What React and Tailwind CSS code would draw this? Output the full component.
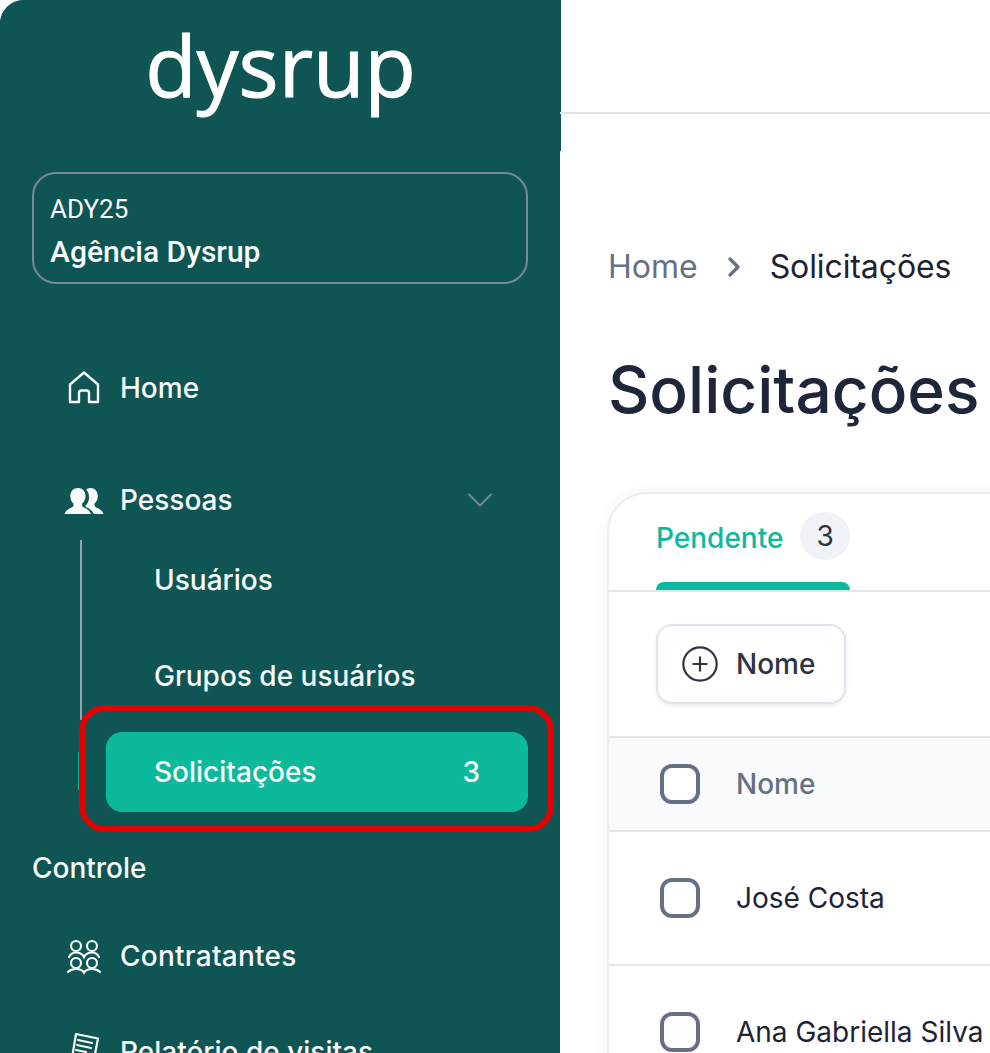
import { ChevronDown, ChevronRight, CirclePlus } from "lucide-react";

function HomeIcon() {
    return (
        <svg className="w-10 h-10" viewBox="0 0 40 40" fill="none" stroke="currentColor" strokeWidth="2.4" strokeLinejoin="round" strokeLinecap="round">
            <path d="M6 16.500 20 4.500l14 12V34H25V25a2.500 2.500 0 0 0-2.500-2.500h-5A2.500 2.500 0 0 0 15 25v9H6z" />
        </svg>
    );
}

function PeopleIcon() {
    return (
        <svg className="w-10 h-10" viewBox="0 0 40 40" fill="#f8fafc">
            <path d="M14 8c4.600 0 7.500 3.400 7.500 8 0 3.400-1.400 6-3.400 7.600v1.600c0 1.300 1 2 2.400 2.600 2.500 1 5.300 2.700 6.500 6.200H.5c1.200-3.500 4-5.200 6.500-6.200 1.400-.6 2.500-1.300 2.500-2.600v-1.600C7.500 22 6.300 19.400 6.300 16c0-4.600 3.100-8 7.700-8z" />
            <path d="M26.500 8c4.300 0 7.300 3.400 7.300 8 0 3.400-1.300 6-3.300 7.600v1.600c0 1.300 1.100 2 2.500 2.600 2.500 1 5.300 2.700 6.500 6.200h-9.800c-1.200-3-3.500-5-6.700-6.400-1.100-.5-1.600-1-1.600-1.800 2.400-2.100 3.600-5 3.600-8.300 0-3.300-.8-6-2.700-8 1.200-1 2.500-1.500 4.200-1.500z" />
        </svg>
    );
}

function GroupIcon() {
    return (
        <svg className="w-10 h-10" viewBox="0 0 40 40" fill="none" stroke="currentColor" strokeWidth="2.2" strokeLinecap="round">
            <circle cx="12" cy="10" r="5" />
            <circle cx="28" cy="10" r="5" />
            <circle cx="12" cy="27" r="5" />
            <circle cx="28" cy="27" r="5" />
            <path d="M5 21c1.500-3 4-4.500 7-4.500 3.500 0 6.500 1.500 8 4.500 1.500-3 4.500-4.500 8-4.500 3 0 5.500 1.500 7 4.500" />
            <path d="M4 36c2-2 5-3 8-3 3.500 0 6.500 1 8 3.500 1.500-2.500 4.500-3.500 8-3.500 3 0 6 1 8 3" />
        </svg>
    );
}

function ReportIcon() {
    return (
        <svg className="w-10 h-10" viewBox="0 0 40 40" fill="none" stroke="currentColor" strokeWidth="2.2" strokeLinecap="round" strokeLinejoin="round">
            <path d="M12 2 34 6.500 28 38H6z" />
            <path d="M14 8l14 3M13 13l14 3M12 18l10 2" />
        </svg>
    );
}

function NavItem({ icon, label, chevron, className = "" }) {
    return (
        <div className="flex items-center h-20 pl-8 pr-[26px] gap-4 text-[28px] font-medium text-[#f8fafc]">
            <span className="w-10 h-10 shrink-0">{icon}</span>
            <span className={`flex-1 ${className}`}>{label}</span>
            {chevron && <ChevronDown className="w-11 h-11 text-[#7d8a96]" strokeWidth={1.1} />}
        </div>
    );
}

function Checkbox() {
    return <span className="block w-10 h-10 rounded-xl border-4 border-[#667085] bg-white shrink-0" />;
}

function Row({ name, className }) {
    return (
        <div className={`flex items-center gap-9 pl-[51px] border-b-2 border-[#e2e5ea] ${className}`}>
            <Checkbox />
            <span className="text-[28px] text-[#1e2235]">{name}</span>
        </div>
    );
}

export default function App() {
    return (
        <div className="relative flex h-[1053px] w-[990px] overflow-hidden bg-white font-['Inter',sans-serif]">
            <aside className="w-[560px] shrink-0 bg-[#0e5553] rounded-tl-[24px]">
                <div className="w-[561px] h-[151px] bg-[#0e5553] rounded-tl-[24px] flex justify-center">
                    <span className="mt-[5px] h-[120px] text-[84px] leading-[120px] font-['Open_Sans',sans-serif] text-white [-webkit-text-stroke:1px_white]">
                        dysrup
                    </span>
                </div>
                <div className="mx-8 mt-[21px] h-[112px] rounded-[24px] border-2 border-[#7d8a96] pl-[16px] pt-[18px] font-['Roboto',sans-serif] text-[#f8fafc]">
                    <p className="text-[26px] leading-[34px]">ADY25</p>
                    <p className="mt-[6px] text-[30px] leading-[40px] font-medium">Agência Dysrup</p>
                </div>
                <nav className="mx-8 mt-16">
                    <NavItem icon={<HomeIcon />} label="Home" />
                    <div className="mt-8">
                        <NavItem icon={<PeopleIcon />} label="Pessoas" chevron />
                    </div>
                    <div className="relative pl-[74px] flex flex-col gap-4 text-[28px] font-medium text-[#f8fafc]">
                        <span className="absolute left-[48px] top-0 w-[2px] h-[180px] bg-[#9aa3ad]" />
                        <span className="absolute left-[46px] top-[212px] w-[1px] h-[38px] bg-[#0cb99d]" />
                        <div className="h-20 flex items-center pl-[48px]">Usuários</div>
                        <div className="h-20 flex items-center pl-[48px]">Grupos de usuários</div>
                        <div className="h-20 flex items-center justify-between pl-[48px] pr-[48px] rounded-2xl bg-[#0cb99d]">
                            <span>Solicitações</span>
                            <span>3</span>
                        </div>
                    </div>
                    <p className="mt-9 mb-7 h-10 leading-10 text-[28px] font-medium text-[#f8fafc]">Controle</p>
                    <div className="flex flex-col gap-4">
                        <NavItem icon={<GroupIcon />} label="Contratantes" className="tracking-[0.25px]" />
                        <NavItem icon={<ReportIcon />} label="Relatório de visitas" />
                    </div>
                </nav>
            </aside>

            <main className="flex-1 min-w-0">
                <div className="h-[114px] border-b-2 border-[#e0e4e8]" />
                <div className="pl-[48px] pt-[129px] flex items-center text-[32px] leading-[48px]">
                    <span className="text-[#667085]">Home</span>
                    <ChevronRight className="w-8 h-8 mx-[20px] text-[#667085]" strokeWidth={2.5} />
                    <span className="text-[#1e2235] tracking-[-0.1px]">Solicitações</span>
                </div>
                <h1 className="pl-[48px] mt-[59px] text-[64px] leading-[80px] font-medium text-[#20263a] whitespace-nowrap">
                    Solicitações
                </h1>
                <div className="ml-[47px] mt-[62px] w-[600px] rounded-tl-[40px] border-l-2 border-t-2 border-[#eceef1] shadow-[0_0_16px_rgba(16,24,40,0.05)] bg-white">
                    <div className="h-[98px] border-b-2 border-[#e2e5ea] pl-[47px]">
                        <div className="relative w-[194px] h-full flex items-start gap-[17px] pt-[18px]">
                            <span className="text-[28px] leading-[52px] font-medium text-[#0cb99d]">Pendente</span>
                            <span className="w-[50px] h-[48px] rounded-full bg-[#eff2f7] flex items-center justify-center text-[28px] text-[#2f3442]">3</span>
                            <span className="absolute left-0 right-0 bottom-0 h-2 rounded-t-lg bg-[#0cb99d]" />
                        </div>
                    </div>
                    <div className="h-[146px] border-b-2 border-[#e2e5ea] pl-[47px] flex items-center">
                        <div className="w-[190px] h-[80px] rounded-2xl border-2 border-[#dde6ef] bg-white shadow-[0_2px_4px_rgba(16,24,40,0.08)] flex items-center gap-4 pl-[22px]">
                            <CirclePlus className="w-10 h-10 text-[#2f3442]" strokeWidth={1.3} />
                            <span className="text-[28px] font-medium text-[#2f3442]">Nome</span>
                        </div>
                    </div>
                    <div className="h-[94px] border-b-2 border-[#e2e5ea] bg-[#f9fafb] flex items-center gap-9 pl-[51px]">
                        <Checkbox />
                        <span className="text-[28px] font-medium text-[#667085]">Nome</span>
                    </div>
                    <Row name="José Costa" className="h-[134px]" />
                    <Row name="Ana Gabriella Silva" className="h-[134px]" />
                </div>
            </main>

            <div className="absolute left-[79px] top-[705px] w-[475px] h-[127px] rounded-[26px] border-[6px] border-[#e60000]" />
        </div>
    );
}
